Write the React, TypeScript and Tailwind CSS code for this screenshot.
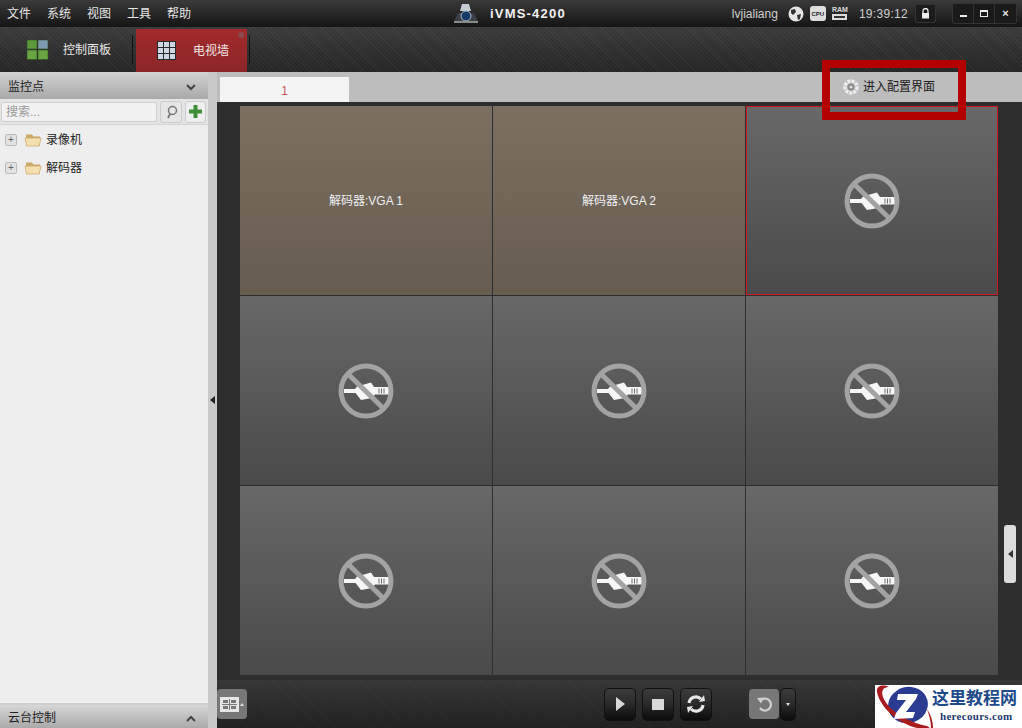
import React from "react";

const font = { fontFamily: '"Liberation Sans","Noto Sans CJK SC",sans-serif' };

function NoSignal() {
  return (
    <svg width="58" height="58" viewBox="0 0 58 58" fill="none">
      <path d="M7 27h11l2-2.500 14-4 3 4.500h15v7.500H38l-3 3.500-11 2-5.500-7H7z" fill="#f6f6f6" />
      <path d="M42 26.500v5M44.500 26.500v5M47 26.500v5" stroke="#6a6a6a" strokeWidth="1" />
      <path d="M11 12L47 47" stroke="#a3a3a3" strokeWidth="5" />
      <circle cx="29" cy="29" r="25" stroke="#a3a3a3" strokeWidth="5" />
    </svg>
  );
}

function Cell({ label, selected }: { label?: string; selected?: boolean }) {
  const bg = label
    ? "bg-gradient-to-b from-[#7c6f62] to-[#675c50]"
    : "bg-gradient-to-b from-[#686868] to-[#4a4a4a]";
  return (
    <div className={`${bg} flex items-center justify-center ${selected ? "border border-[#d0181f]" : ""}`}>
      {label ? <span className="text-[12px] text-[#f0f0f0]">{label}</span> : <NoSignal />}
    </div>
  );
}

function Folder() {
  return (
    <svg width="18" height="14" viewBox="0 0 18 14">
      <path d="M2 1.500h6l1.500 2H16v9H2z" fill="#c9a868" />
      <path d="M1 5h16l-1.800 8H2.500z" fill="#f3dfae" stroke="#c9a868" strokeWidth="0.700" />
    </svg>
  );
}

function TreeRow({ text }: { text: string }) {
  return (
    <div className="flex h-[28px] items-center pl-[5px]">
      <span className="flex h-[12px] w-[12px] items-center justify-center rounded-[2px] border border-[#bbb] bg-[#e2e2e2] text-[10px] leading-none text-[#666]">
        +
      </span>
      <span className="ml-[7px] flex">
        <Folder />
      </span>
      <span className="ml-[4px] text-[12px] text-[#222]">{text}</span>
    </div>
  );
}

const btn =
  "flex h-[33px] w-[32px] items-center justify-center rounded-[5px] border border-[#111] bg-gradient-to-b from-[#3c3c3c] via-[#2a2a2a] to-[#0c0c0c]";
const hatch =
  "bg-[repeating-linear-gradient(45deg,#3b3b3b_0px,#3b3b3b_1px,#2b2b2b_1px,#2b2b2b_3px)]";

export default function App() {
  return (
    <div className="relative flex h-[728px] w-[1022px] flex-col overflow-hidden bg-[#222]" style={font}>
      {/* title bar */}
      <div className="flex h-[27px] shrink-0 items-center bg-gradient-to-b from-[#3a3a3a] to-[#151515] text-[12px] text-[#e6e6e6]">
        <div className="flex w-[400px] gap-[16px] pl-[7px]">
          <span>文件</span>
          <span>系统</span>
          <span>视图</span>
          <span>工具</span>
          <span>帮助</span>
        </div>
        <div className="flex items-center">
          <svg width="30" height="24" viewBox="0 0 30 24" className="ml-[51px]">
            <path d="M11 2h7l2 7H9z" fill="#c9ced6" />
            <path d="M3 19l4-8h16l4 8z" fill="#3a3f48" />
            <circle cx="15" cy="14" r="5" fill="#163a68" stroke="#aeb8c6" />
            <rect x="3" y="19" width="24" height="2" fill="#8a8a8a" />
          </svg>
          <span className="ml-[9px] text-[13px] font-bold tracking-[1.2px] text-[#f2f2f2]">iVMS-4200</span>
        </div>
        <div className="ml-auto flex items-center">
          <span className="text-[12px] text-[#cfcfcf]">lvjialiang</span>
          <svg width="16" height="16" viewBox="0 0 16 16" className="ml-[10px]">
            <circle cx="8" cy="8" r="7.500" fill="#e6e6e6" />
            <path d="M3 4l4-1 1 3-3 3-2-2zM9 9l4-1-1 5-2 1z" fill="#333" />
          </svg>
          <span className="ml-[6px] flex h-[15px] w-[16px] items-center justify-center rounded-[3px] bg-[#ddd] text-[6px] font-bold leading-none text-[#222]">
            CPU
          </span>
          <span className="ml-[6px] flex h-[16px] w-[16px] flex-col items-center text-[7px] font-bold leading-[8px] text-[#ddd]">
            RAM
            <span className="h-[6px] w-[15px] border-[2px] border-[#ddd] bg-[#333]" />
          </span>
          <span className="ml-[11px] text-[12px] tracking-[0.3px] text-[#cfcfcf]">19:39:12</span>
          <span className="ml-[7px] flex h-[19px] w-[21px] items-center justify-center rounded-[2px] border border-[#333] bg-[#1c1c1c]">
            <svg width="9" height="11" viewBox="0 0 9 11">
              <path d="M2 5V3a2.500 2.500 0 015 0v2" stroke="#eee" strokeWidth="1.300" fill="none" />
              <rect x="1" y="5" width="7" height="5.500" fill="#eee" />
            </svg>
          </span>
          <span className="ml-[16px] mr-[5px] flex h-[21px] items-stretch rounded-[2px] border border-[#333] bg-[#1a1a1a]">
            <span className="flex w-[21px] items-center justify-center border-r border-[#333]">
              <span className="mt-[5px] h-[2px] w-[7px] bg-[#eee]" />
            </span>
            <span className="flex w-[21px] items-center justify-center border-r border-[#333]">
              <span className="h-[7px] w-[8px] border border-t-[2px] border-[#eee]" />
            </span>
            <span className="flex w-[21px] items-center justify-center text-[11px] font-bold leading-none text-[#eee]">
              ×
            </span>
          </span>
        </div>
      </div>

      {/* nav bar */}
      <div className="relative flex h-[45px] shrink-0 bg-gradient-to-b from-[#4a4a4a] to-[#1f1f1f]">
        <div className={`absolute inset-0 opacity-50 ${hatch}`} />
        <div className="relative flex h-full w-[132px] items-center border-r border-transparent">
          <svg width="22" height="20" viewBox="0 0 22 20" className="ml-[27px]">
            <rect x="0" y="0" width="10" height="9" fill="#5d9a3c" stroke="#2c4a1e" strokeWidth="0.600" />
            <rect x="11" y="0" width="10" height="9" fill="#7d9cb0" stroke="#2c4a1e" strokeWidth="0.600" />
            <rect x="0" y="10" width="10" height="9.500" fill="#6aa544" stroke="#2c4a1e" strokeWidth="0.600" />
            <rect x="11" y="10" width="10" height="9.500" fill="#6aa544" stroke="#2c4a1e" strokeWidth="0.600" />
          </svg>
          <span className="ml-[14px] text-[12px] text-[#e8e8e8]">控制面板</span>
        </div>
        <span className="relative my-[8px] w-[1px] bg-[#111]" />
        <div className="relative ml-[3px] mt-[2px] flex w-[111px] items-center bg-gradient-to-b from-[#a32a2c] to-[#8a2628]">
          <svg width="19" height="19" viewBox="0 0 19 19" className="ml-[21px]">
            <rect x="0" y="0" width="19" height="19" fill="#2a2a2a" />
            {[1, 7, 13].map((y) =>
              [1, 7, 13].map((x) => (
                <rect key={`${x}-${y}`} x={x} y={y} width="5" height="5" fill="#cfd8e2" />
              ))
            )}
          </svg>
          <span className="ml-[17px] text-[12px] text-[#f2e6e6]">电视墙</span>
          <span className="absolute right-[3px] top-[3px] h-[6px] w-[6px] rounded-full bg-[#8a4a4a]" />
        </div>
        <span className="relative my-[8px] ml-[2px] w-[1px] bg-[#111]" />
      </div>

      {/* body */}
      <div className="flex min-h-0 flex-1">
        {/* sidebar */}
        <div className="flex w-[208px] shrink-0 flex-col bg-[#efeeee]">
          <div className="flex h-[27px] shrink-0 items-center justify-between bg-gradient-to-b from-[#d2d2d2] to-[#a9a9a9] pl-[8px] pr-[12px] pt-[3px] text-[12px] text-[#222]">
            <span>监控点</span>
            <svg width="10" height="7" viewBox="0 0 10 7" fill="none">
              <path d="M1 1l4 4 4-4" stroke="#444" strokeWidth="2" />
            </svg>
          </div>
          <div className="flex h-[26px] shrink-0 items-center gap-[3px] border-b border-[#d5d5d5] bg-[#e4e4e4] pl-[1px]">
            <span className="flex h-[20px] w-[156px] items-center rounded-[2px] border border-[#d0d0d0] bg-[#f1f1f1] pl-[4px] text-[12px] text-[#999]">
              搜索...
            </span>
            <span className="flex h-[22px] w-[22px] items-center justify-center rounded-[3px] border border-[#ccc] bg-[#e6e6e6]">
              <svg width="13" height="14" viewBox="0 0 13 14" fill="none">
                <circle cx="7.500" cy="5.500" r="4" stroke="#777" strokeWidth="1.500" />
                <path d="M5 9l-2 4" stroke="#777" strokeWidth="1.800" />
              </svg>
            </span>
            <span className="flex h-[22px] w-[21px] items-center justify-center rounded-[3px] border border-[#ccc] bg-[#eee]">
              <svg width="13" height="13" viewBox="0 0 13 13">
                <path d="M4.500 0h4v4.500H13v4H8.500V13h-4V8.500H0v-4h4.500z" fill="#3f8f3a" />
              </svg>
            </span>
          </div>
          <div className="min-h-0 flex-1 pt-[1px]">
            <TreeRow text="录像机" />
            <TreeRow text="解码器" />
          </div>
          <div className="flex h-[25px] shrink-0 items-center justify-between border-t-2 border-[#cfcfcf] bg-gradient-to-b from-[#d6d6d6] to-[#aaaaaa] pl-[8px] pr-[12px] pt-[3px] text-[12px] text-[#222]">
            <span>云台控制</span>
            <svg width="10" height="7" viewBox="0 0 10 7" fill="none">
              <path d="M1 6l4-4 4 4" stroke="#444" strokeWidth="2" />
            </svg>
          </div>
        </div>

        {/* splitter */}
        <div className="flex w-[9px] shrink-0 items-center bg-[#c9c9c9] pl-[2px]">
          <span className="h-0 w-0 border-y-[4px] border-r-[5px] border-y-transparent border-r-[#222]" />
        </div>

        {/* main */}
        <div className="flex min-w-0 flex-1 flex-col bg-[#2c2c2c]">
          <div className="flex h-[30px] shrink-0 items-end bg-[#bdbdbd] pl-[3px]">
            <div className="flex h-[25px] w-[129px] items-center justify-center bg-[#f4f4f4] pt-[2px] text-[12px] text-[#c4585c]">
              1
            </div>
            <div className="ml-[494px] flex h-full items-center text-[12px] text-[#1a1a1a]">
              <svg width="16" height="16" viewBox="0 0 16 16" className="mr-[4px]" fill="none">
                <circle cx="8" cy="8" r="6" stroke="#ececec" strokeWidth="3.500" strokeDasharray="3 1" />
                <circle cx="8" cy="8" r="3.500" fill="#8c8c8c" />
                <circle cx="8" cy="8" r="1.500" fill="#dcdcdc" />
              </svg>
              进入配置界面
            </div>
          </div>

          <div className={`flex min-h-0 flex-1 flex-col ${hatch}`}>
            <div className="relative h-[578px] shrink-0 bg-[#2d2d2d] pl-[23px] pr-[24px] pt-[4px]">
              <div className="grid h-[569px] grid-cols-3 grid-rows-3 gap-px bg-[#2e2e2e]">
                <Cell label="解码器:VGA 1" />
                <Cell label="解码器:VGA 2" />
                <Cell selected />
                <Cell />
                <Cell />
                <Cell />
                <Cell />
                <Cell />
                <Cell />
              </div>
              <div className="absolute right-[6px] top-[423px] flex h-[58px] w-[12px] items-center justify-center rounded-[3px] bg-[#dcdcdc]">
                <span className="h-0 w-0 border-y-[4px] border-r-[5px] border-y-transparent border-r-[#333]" />
              </div>
            </div>

            {/* toolbar */}
            <div className="flex min-h-0 flex-1 items-center bg-gradient-to-b from-[#3a3a3a]/70 to-[#1c1c1c]/70">
              <span className="flex h-[30px] w-[30px] items-center gap-[1px] rounded-[4px] bg-[#777] pl-[3px]">
                <span className="grid h-[15px] w-[19px] grid-cols-2 gap-[1px] border-2 border-[#e6e6e6]">
                  <span className="border border-[#e6e6e6]" />
                  <span className="border border-[#e6e6e6]" />
                  <span className="border border-[#e6e6e6]" />
                  <span className="border border-[#e6e6e6]" />
                </span>
                <span className="h-0 w-0 border-x-[2px] border-b-[3px] border-x-transparent border-b-[#ddd]" />
              </span>
              <span className={`${btn} ml-[357px]`}>
                <span className="h-0 w-0 border-y-[7px] border-l-[9px] border-y-transparent border-l-[#d8d8d8]" />
              </span>
              <span className={`${btn} ml-[6px]`}>
                <span className="h-[11px] w-[12px] bg-[#d8d8d8]" />
              </span>
              <span className={`${btn} ml-[6px]`}>
                <svg width="20" height="18" viewBox="0 0 20 18" fill="none">
                  <path d="M3 8a7 7 0 0112-4" stroke="#e6e6e6" strokeWidth="3.200" />
                  <path d="M17 10a7 7 0 01-12 4" stroke="#e6e6e6" strokeWidth="3.200" />
                  <path d="M13 7l6-1-1-6zM7 11l-6 1 1 6z" fill="#e6e6e6" />
                </svg>
              </span>
              <span className="ml-[37px] flex h-[30px] w-[30px] items-center justify-center rounded-[4px] bg-[#777]">
                <svg width="17" height="16" viewBox="0 0 17 16" fill="none">
                  <path d="M5 4a6 6 0 11-1 8" stroke="#cfcfcf" strokeWidth="2.200" />
                  <path d="M1 2l7-0.500-3 6z" fill="#cfcfcf" />
                </svg>
              </span>
              <span className={`${btn} ml-[1px] !w-[16px]`}>
                <span className="h-0 w-0 border-x-[2px] border-t-[3px] border-x-transparent border-t-[#ddd]" />
              </span>
            </div>
          </div>
        </div>
      </div>

      {/* annotation */}
      <div className="absolute left-[822px] top-[60px] h-[60px] w-[144px] border-[8px] border-[#b40000]" />

      {/* watermark */}
      <div className="absolute bottom-0 right-0 flex h-[43px] w-[147px] bg-white">
        <svg width="60" height="43" viewBox="0 0 60 43" className="shrink-0">
          <ellipse cx="33" cy="20" rx="20" ry="18" fill="#2c3b92" transform="rotate(-15 33 20)" />
          <path d="M2 7C1 1 8-1 14 2 8 2 6 6 8 12c5 13 24 25 44 29l3 2H42C22 38 5 22 2 7z" fill="#a81c20" />
          <path d="M52 24c4 6 6 12 6 19h-2c0-7-2-13-4-19z" fill="#a81c20" />
          <path d="M23 9h20l-2 5-10 13h9l-2 6-19 1 2-6 10-13h-9z" fill="#fff" />
        </svg>
        <div className="flex min-w-0 flex-1 flex-col items-start">
          <span
            className="-ml-[3px] text-[17px] font-bold leading-[24px] text-[#1d4a8a]"
            style={{ fontFamily: '"Noto Sans CJK SC",serif' }}
          >
            这里教程网
          </span>
          <span
            className="ml-[5px] whitespace-nowrap text-[11px] font-bold leading-[14px] tracking-[0.3px] text-[#1f3a70]"
            style={{ fontFamily: '"Liberation Serif",serif' }}
          >
            herecours.com
          </span>
        </div>
      </div>
    </div>
  );
}
